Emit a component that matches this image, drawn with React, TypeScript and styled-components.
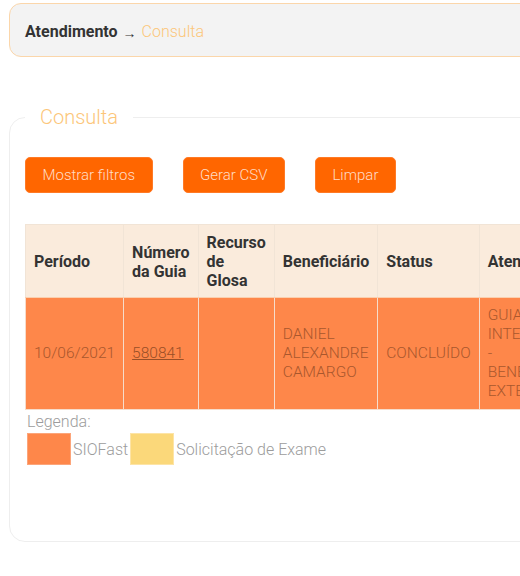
import React from "react";
import styled, { createGlobalStyle } from "styled-components";

const Global = createGlobalStyle`
  html, body { margin: 0; padding: 0; background: #ffffff; }
  body { font-family: Roboto, "Liberation Sans", sans-serif; color: #333; }
  * { box-sizing: border-box; }
`;

const Page = styled.div`
  width: 1100px;
  padding: 3px 0 0 9px;
  display: flex;
  flex-direction: column;
`;

const Breadcrumb = styled.div`
  height: 54px;
  display: flex;
  align-items: center;
  gap: 5px;
  padding: 3px 0 0 15px;
  background: #f3f3f3;
  border: 1px solid #fbd6aa;
  border-radius: 12px;
  font-size: 16px;
`;

const Crumb = styled.span<{ $active?: boolean }>`
  font-weight: ${(p) => (p.$active ? 300 : 700)};
  color: ${(p) => (p.$active ? "#fcc679" : "#333")};
`;

const Arrow = styled.span`
  font-size: 14px;
  color: #333;
  margin-top: 2px;
`;

const Panel = styled.fieldset`
  margin: 48px 0 0;
  padding: 28px 15px 76px;
  border: 1px solid #eeeeee;
  border-radius: 16px;
  min-width: 0;
`;

const Title = styled.legend`
  padding: 0 15px;
  font-size: 20px;
  font-weight: 300;
  color: #fcc679;
`;

const Toolbar = styled.div`
  display: flex;
  gap: 30px;
  margin-bottom: 31px;
`;

const Button = styled.button`
  height: 36px;
  padding: 0 16.5px;
  border: 1px solid #ff7a26;
  border-radius: 5px;
  background: #ff6600;
  color: #ffdcc6;
  font-family: Roboto, "Liberation Sans", sans-serif;
  font-weight: 300;
  font-size: 15px;
  cursor: pointer;
`;

const Table = styled.table`
  width: 1px;
  border-collapse: collapse;
  line-height: 19px;
`;

const Th = styled.th`
  background: #faebdc;
  border: 1px solid #f1e4d6;
  border-bottom: 1px solid #fbcfae;
  padding: 8px 8px 7px;
  text-align: left;
  font-size: 16px;
  font-weight: 700;
  color: #333;
`;

const Td = styled.td<{ $kind: "siofast" | "exame" }>`
  background: ${(p) => (p.$kind === "siofast" ? "#fe874a" : "#fbd87a")};
  border: 1px solid #f6dccb;
  padding: 8px;
  font-size: 15.5px;
  font-weight: 300;
  color: #a9572d;
  vertical-align: middle;
`;

const GuideLink = styled.a`
  color: #9a4f27;
  text-decoration: underline;
`;

const Legend = styled.div`
  margin: 2px 0 0 2px;
  display: flex;
  flex-direction: column;
  gap: 2px;
  font-size: 16px;
  font-weight: 300;
  color: #9c9c9c;
`;

const LegendItems = styled.div`
  display: flex;
  align-items: center;
  gap: 2px;
`;

const Swatch = styled.span<{ $color: string; $edge: string }>`
  width: 44px;
  height: 32px;
  background: ${(p) => p.$color};
  border: 1px solid ${(p) => p.$edge};
`;

const columns = [
  "Período",
  "Número da Guia",
  "Recurso de Glosa",
  "Beneficiário",
  "Status",
  "Atendimento",
  "Prestador",
  "Ações",
];

export default function App() {
  return (
    <>
      <Global />
      <Page>
        <Breadcrumb>
          <Crumb>Atendimento</Crumb>
          <Arrow>→</Arrow>
          <Crumb $active>Consulta</Crumb>
        </Breadcrumb>
        <Panel>
          <Title>Consulta</Title>
          <Toolbar>
            <Button>Mostrar filtros</Button>
            <Button>Gerar CSV</Button>
            <Button>Limpar</Button>
          </Toolbar>
          <Table>
            <thead>
              <tr>
                {columns.map((c) => (
                  <Th key={c}>{c}</Th>
                ))}
              </tr>
            </thead>
            <tbody>
              <tr>
                <Td $kind="siofast">10/06/2021</Td>
                <Td $kind="siofast">
                  <GuideLink href="#">580841</GuideLink>
                </Td>
                <Td $kind="siofast"></Td>
                <Td $kind="siofast">DANIEL ALEXANDRE CAMARGO</Td>
                <Td $kind="siofast">CONCLUÍDO</Td>
                <Td $kind="siofast">GUIA INTERNAÇÃO - BENEFICIÁRIO EXTERNO</Td>
                <Td $kind="siofast">HOSPITAL SÃO LUCAS</Td>
                <Td $kind="siofast"></Td>
              </tr>
            </tbody>
          </Table>
          <Legend>
            <span>Legenda:</span>
            <LegendItems>
              <Swatch $color="#fe874a" $edge="#fca57a" />
              <span>SIOFast</span>
              <Swatch $color="#fbd87a" $edge="#fde4a6" />
              <span>Solicitação de Exame</span>
            </LegendItems>
          </Legend>
        </Panel>
      </Page>
    </>
  );
}
